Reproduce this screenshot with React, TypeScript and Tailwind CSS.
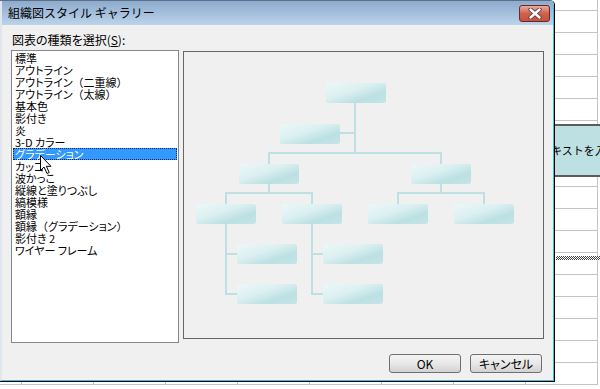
import React from "react";

const items: React.ReactNode[] = [
  "標準",
  "アウトライン",
  <>アウトライン<span className="[font-feature-settings:normal]">（</span>二重線<span className="[font-feature-settings:normal]">）</span></>,
  <>アウトライン<span className="[font-feature-settings:normal]">（</span>太線<span className="[font-feature-settings:normal]">）</span></>,
  "基本色",
  "影付き",
  "炎",
  "3-D カラー",
  "グラデーション",
  "カッコ",
  "波かっこ",
  "縦線と塗りつぶし",
  "縞模様",
  "額縁",
  <>額縁<span className="[font-feature-settings:normal]">（</span>グラデーション<span className="[font-feature-settings:normal]">）</span></>,
  "影付き 2",
  "ワイヤー フレーム",
];

const boxes: [number, number][] = [
  [326, 83],
  [280, 124],
  [239, 164],
  [411, 164],
  [196, 204],
  [282, 204],
  [368, 204],
  [454, 204],
  [237, 244],
  [237, 284],
  [323, 244],
  [323, 284],
];

const lines: [number, number, number, number][] = [
  [355, 103, 355, 153],
  [340, 133, 355, 133],
  [269, 153, 441, 153],
  [269, 153, 269, 164],
  [441, 153, 441, 164],
  [269, 184, 269, 193],
  [226, 193, 312, 193],
  [226, 193, 226, 204],
  [312, 193, 312, 204],
  [441, 184, 441, 193],
  [398, 193, 484, 193],
  [398, 193, 398, 204],
  [484, 193, 484, 204],
  [226, 224, 226, 294],
  [226, 254, 237, 254],
  [226, 294, 237, 294],
  [312, 224, 312, 294],
  [312, 254, 323, 254],
  [312, 294, 323, 294],
];

function OrgChart() {
  return (
    <svg width="359" height="286" viewBox="184 52 359 286" className="block">
      <defs>
        <linearGradient id="bx" x1="0" y1="0" x2="1" y2="1">
          <stop offset="0" stopColor="#ecf7f8" />
          <stop offset="0.4" stopColor="#dcf0f1" />
          <stop offset="0.72" stopColor="#bbe0e3" />
          <stop offset="1" stopColor="#c6e5e8" />
        </linearGradient>
      </defs>
      {lines.map((l, i) => (
        <line
          key={i}
          x1={l[0]}
          y1={l[1]}
          x2={l[2]}
          y2={l[3]}
          stroke="#bde0e3"
          strokeWidth="2"
          strokeLinecap="square"
        />
      ))}
      {boxes.map((b, i) => (
        <rect key={i} x={b[0]} y={b[1]} width="60" height="20" rx="2.5" fill="url(#bx)" />
      ))}
    </svg>
  );
}

function SheetGrid() {
  const rows = Array.from({ length: 18 });
  const cols = Array.from({ length: 8 });
  return (
    <div className="flex flex-col">
      {rows.map((_, r) => (
        <div
          key={r}
          className={
            r === 0
              ? "flex h-[11px] border-b border-[#c4c4c4]"
              : "flex h-[22px] border-b border-[#c4c4c4]"
          }
        >
          <div className="w-[22px] shrink-0 border-r border-[#c4c4c4]" />
          {cols.map((_, c) => (
            <div key={c} className="w-[72px] shrink-0 border-r border-[#c4c4c4]" />
          ))}
        </div>
      ))}
    </div>
  );
}

export default function App() {
  return (
    <div className="relative w-[600px] h-[389px] overflow-hidden bg-white font-['Noto_Sans_CJK_JP',sans-serif] text-black">
      {/* spreadsheet behind */}
      <div className="absolute left-0 top-0">
        <SheetGrid />
      </div>
      <div className="absolute left-[528px] top-[124px] w-[120px] h-[53px] bg-[#bde0e2] border-y-2 border-[#5c5c5c] flex items-center pl-[12px] text-[11px] leading-none whitespace-nowrap">
        テキストを入力
      </div>
      <div className="absolute left-[556px] top-[256px] w-[44px] h-[4px] bg-[repeating-conic-gradient(#444_0_25%,#fff_0_50%)] bg-[length:2px_2px]" />

      {/* dialog */}
      <div className="absolute left-0 top-0 z-10 w-[555px] h-[382px] border-r border-b border-black rounded-tr-[5px] border-t border-t-[#5d6f86] overflow-hidden">
        <div className="w-full h-full flex flex-col border-l-2 border-l-[#dfe6ee] border-r border-b border-r-[#3fbbe8] border-b-[#3fbbe8]">
          <div className="relative h-[24px] shrink-0 bg-gradient-to-b from-[#8dabcd] to-[#bcd3ea] flex items-center pl-[6px] text-[12px] leading-none">
            <span>組織図スタイル ギャラリー</span>
            <div className="absolute left-[517px] top-[4px] w-[31px] h-[17px] rounded-[3px] border border-[#6b2a22] bg-gradient-to-b from-[#e8ab9f] via-[#d0604f] to-[#c9503e] flex items-center justify-center">
              <svg width="14" height="11" viewBox="0 0 14 11">
                <path d="M2.5 1.5 L11.5 9.5 M11.5 1.5 L2.5 9.5" stroke="#5b3a36" strokeWidth="4.2" strokeLinecap="round" />
                <path d="M2.5 1.5 L11.5 9.5 M11.5 1.5 L2.5 9.5" stroke="#ffffff" strokeWidth="2.4" strokeLinecap="round" />
              </svg>
            </div>
          </div>
          <div className="flex-1 bg-[#f0f0f0] flex flex-col pl-[9px] [font-feature-settings:'palt']">
            <div className="h-[25px] pt-[8px] pl-[1px] text-[12px] leading-[14px]">
              図表の種類を選択(<span className="underline">S</span>):
            </div>
            <div className="flex items-start gap-[4px]">
              <div className="relative w-[168px] h-[293px] border border-[#828790] bg-white pt-[1px] px-[1px] text-[11px] leading-[12px]">
                {items.map((t, i) => (
                  <div
                    key={i}
                    className={
                      i === 8
                        ? "h-[12px] pl-[2px] bg-[#3399ff] text-white whitespace-nowrap outline-1 outline-dotted outline-[#0a2a6a] -outline-offset-1"
                        : "h-[12px] pl-[2px] whitespace-nowrap"
                    }
                  >
                    {t}
                  </div>
                ))}
                <svg className="absolute left-[28px] top-[104px]" width="13" height="20" viewBox="0 0 13 20">
                  <path d="M0.5 0.5 L0.5 15.5 L4 12 L7 18.5 L9.2 17.5 L6.4 11.3 L11 11.3 Z" fill="#fff" stroke="#000" strokeWidth="1" strokeLinejoin="round" />
                </svg>
              </div>
              <div className="mt-[1px] w-[361px] h-[288px] border border-[#666666] bg-[#f0f0f0]">
                <OrgChart />
              </div>
            </div>
            <div className="flex gap-[9px] pl-[378px] mt-[11px]">
              <div className="w-[72px] h-[19px] rounded-[3px] border border-[#707070] bg-gradient-to-b from-[#f4f4f4] via-[#e8e8e8] to-[#d2d2d2] flex items-center justify-center text-[12px] leading-none">
                OK
              </div>
              <div className="w-[72px] h-[19px] rounded-[3px] border border-[#707070] bg-gradient-to-b from-[#f4f4f4] via-[#e8e8e8] to-[#d2d2d2] flex items-center justify-center text-[12px] leading-none">
                キャンセル
              </div>
            </div>
          </div>
        </div>
      </div>
    </div>
  );
}
